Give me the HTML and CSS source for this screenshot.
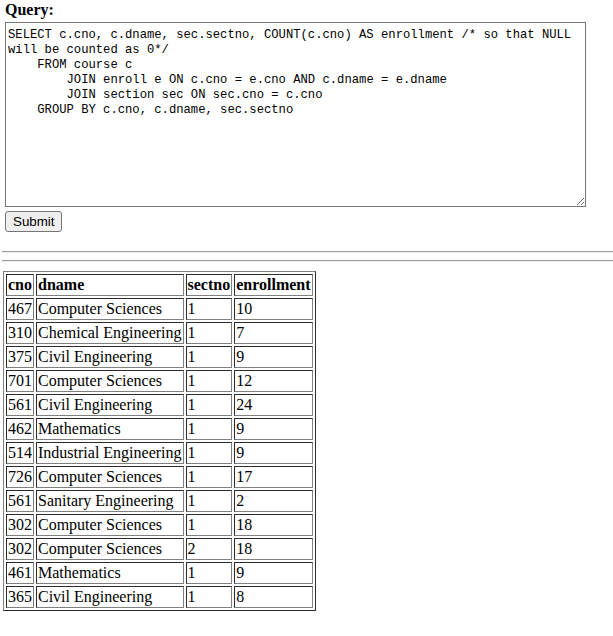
FILE: index.html
```html
<!DOCTYPE html>
<html>
<head>
<meta charset="utf-8">
<link rel="stylesheet" href="styles.css">
</head>
<body>
<form class="query-form">
<div class="label">Query:</div>
<textarea class="sql" cols="80" rows="12">SELECT c.cno, c.dname, sec.sectno, COUNT(c.cno) AS enrollment /* so that NULL will be counted as 0*/
    FROM course c
        JOIN enroll e ON c.cno = e.cno AND c.dname = e.dname
        JOIN section sec ON sec.cno = c.cno
    GROUP BY c.cno, c.dname, sec.sectno</textarea>
<button type="button" class="submit">Submit</button>
</form>
<hr class="rule rule-first">
<hr class="rule rule-second">
<table class="results">
<tr><th>cno</th><th>dname</th><th>sectno</th><th>enrollment</th></tr>
<tr><td>467</td><td>Computer Sciences</td><td>1</td><td>10</td></tr>
<tr><td>310</td><td>Chemical Engineering</td><td>1</td><td>7</td></tr>
<tr><td>375</td><td>Civil Engineering</td><td>1</td><td>9</td></tr>
<tr><td>701</td><td>Computer Sciences</td><td>1</td><td>12</td></tr>
<tr><td>561</td><td>Civil Engineering</td><td>1</td><td>24</td></tr>
<tr><td>462</td><td>Mathematics</td><td>1</td><td>9</td></tr>
<tr><td>514</td><td>Industrial Engineering</td><td>1</td><td>9</td></tr>
<tr><td>726</td><td>Computer Sciences</td><td>1</td><td>17</td></tr>
<tr><td>561</td><td>Sanitary Engineering</td><td>1</td><td>2</td></tr>
<tr><td>302</td><td>Computer Sciences</td><td>1</td><td>18</td></tr>
<tr><td>302</td><td>Computer Sciences</td><td>2</td><td>18</td></tr>
<tr><td>461</td><td>Mathematics</td><td>1</td><td>9</td></tr>
<tr><td>365</td><td>Civil Engineering</td><td>1</td><td>8</td></tr>
</table>
</body>
</html>
```
FILE: styles.css
```css
html, body {
  margin: 0;
  padding: 0;
  background: #ffffff;
  color: #000000;
  font-family: "Liberation Serif", "Times New Roman", serif;
  font-size: 16px;
}

.query-form {
  display: flex;
  flex-direction: column;
  align-items: flex-start;
  padding-left: 5px;
  margin: 0;
}

.label {
  font-weight: bold;
  font-size: 16px;
  line-height: 18px;
  margin-top: 1px;
}

.sql {
  display: block;
  box-sizing: border-box;
  width: 581px;
  height: 185px;
  margin: 3px 0 0 0;
  padding: 5px 2px 2px 2px;
  border: 1px solid #767676;
  border-radius: 0;
  font-family: "Liberation Mono", "Courier New", monospace;
  font-size: 12.2px;
  line-height: 15px;
  color: #000000;
  background: #ffffff;
  overflow: hidden;
}

.submit {
  box-sizing: border-box;
  height: 21px;
  margin-top: 4px;
  padding: 0 7px;
  font-family: "Liberation Sans", Arial, sans-serif;
  font-size: 13.333px;
  color: #000000;
  background: #efefef;
  border: 1px solid #767676;
  border-radius: 3px;
}

.rule {
  display: block;
  height: 0;
  margin: 0 0 0 2px;
  border: 0;
  border-top: 1px solid #9a9a9a;
  border-bottom: 1px solid #eeeeee;
}

.rule-first {
  margin-top: 19px;
}

.rule-second {
  margin-top: 7px;
}

.results {
  margin: 9px 0 0 3px;
  border: 1px outset #808080;
  border-spacing: 2px;
  font-size: 16px;
}

.results th,
.results td {
  border: 1px inset #808080;
  padding: 1px;
  text-align: left;
  white-space: nowrap;
}

.results th {
  font-weight: bold;
}
```
